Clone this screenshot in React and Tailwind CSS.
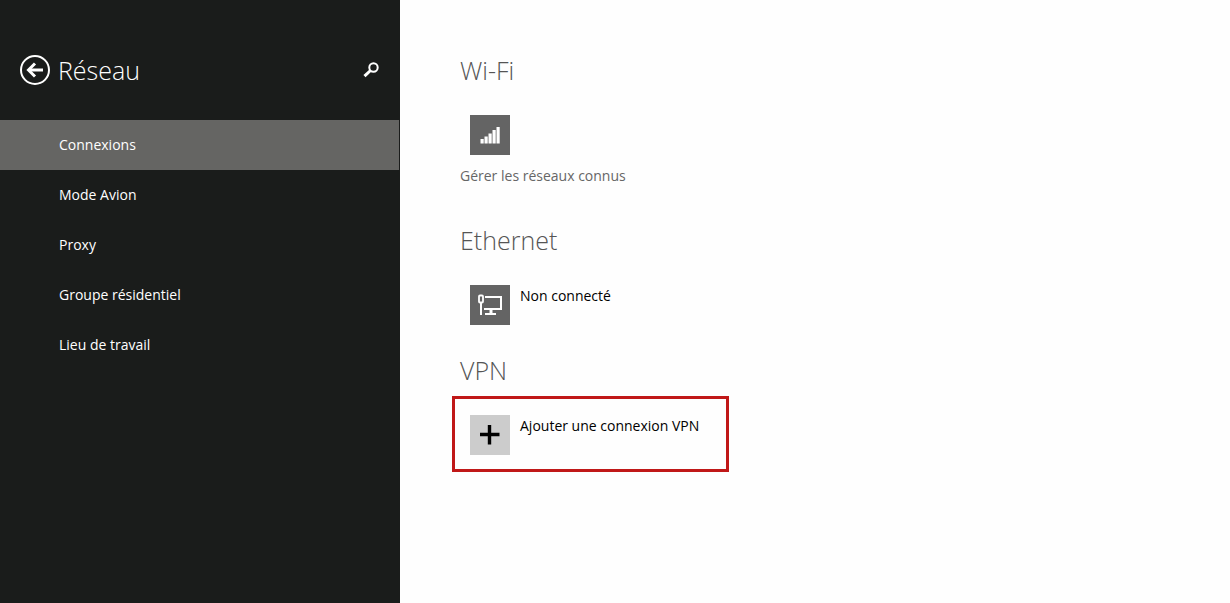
const navItems = [
  "Connexions",
  "Mode Avion",
  "Proxy",
  "Groupe résidentiel",
  "Lieu de travail",
];

function BackIcon() {
  return (
    <svg width="30" height="30" viewBox="0 0 30 30" fill="none" stroke="currentColor">
      <circle cx="15" cy="15" r="14" strokeWidth="2" />
      <path d="M9 15H23" strokeWidth="3" />
      <path d="M15 8.5L8.5 15l6.500 6.500" strokeWidth="3" />
    </svg>
  );
}

function SearchIcon() {
  return (
    <svg width="16" height="16" viewBox="0 0 16 16" fill="none" stroke="currentColor">
      <circle cx="10.500" cy="5.500" r="4.200" strokeWidth="2" />
      <path d="M7.500 8.500L1.500 14.200" strokeWidth="3" />
    </svg>
  );
}

function WifiIcon() {
  return (
    <svg width="40" height="40" viewBox="0 0 40 40" fill="currentColor">
      <rect x="10.500" y="24" width="3.200" height="4.500" />
      <rect x="14.500" y="21.500" width="3.200" height="7" />
      <rect x="18.500" y="18.500" width="3.200" height="10" />
      <rect x="22.500" y="15" width="3.200" height="13.500" />
      <rect x="26.500" y="12" width="3.200" height="16.500" />
    </svg>
  );
}

function EthernetIcon() {
  return (
    <svg width="40" height="40" viewBox="0 0 40 40" fill="none" stroke="currentColor">
      <rect x="9" y="10.500" width="4" height="7" rx="1" strokeWidth="1.800" />
      <path d="M11 18v12" strokeWidth="2" />
      <path d="M15 12H31V24H14" strokeWidth="2" />
      <path d="M21 24v5" strokeWidth="3" />
      <path d="M15 29H26" strokeWidth="2" />
    </svg>
  );
}

function PlusIcon() {
  return (
    <svg width="40" height="40" viewBox="0 0 40 40" fill="none" stroke="currentColor">
      <path d="M10 19.500H29.500M19.500 10V29.500" strokeWidth="3.400" />
    </svg>
  );
}

function SectionTitle({ children }) {
  return (
    <h2 className="text-[25px] leading-10 font-light text-[#555555]">{children}</h2>
  );
}

function Sidebar() {
  return (
    <aside className="w-[400px] shrink-0 bg-[#1a1c1b] text-white">
      <header className="flex h-[120px] items-center gap-2 pb-[10px] pt-[30px] pl-5 pr-[21px]">
        <button type="button" aria-label="Retour">
          <BackIcon />
        </button>
        <h1 className="flex-1 text-[25px] leading-10 font-light">Réseau</h1>
        <button type="button" aria-label="Rechercher">
          <SearchIcon />
        </button>
      </header>
      <nav className="mr-px">
        {navItems.map((item, i) => (
          <a
            key={item}
            href="#"
            aria-current={i === 0 ? "page" : undefined}
            className={`flex h-[50px] items-center pl-[59px] ${i === 0 ? "bg-[#656563]" : ""}`}
          >
            {item}
          </a>
        ))}
      </nav>
    </aside>
  );
}

export default function App() {
  return (
    <div className="flex min-h-screen bg-[#fefefe] font-['Open_Sans','Noto_Sans',sans-serif] text-[14px] leading-[22px]">
      <Sidebar />
      <main className="flex-1 pl-[60px] pt-[50px]">
        {/* Wi-Fi */}
        <section>
          <SectionTitle>Wi-Fi</SectionTitle>
          <button
            type="button"
            aria-label="Wi-Fi"
            className="ml-[10px] mt-[25px] block bg-[#646464] text-white"
          >
            <WifiIcon />
          </button>
          <a href="#" className="mt-[10px] block w-fit text-[#666666]">
            Gérer les réseaux connus
          </a>
        </section>

        {/* Ethernet */}
        <section className="mt-[33px]">
          <SectionTitle>Ethernet</SectionTitle>
          <button type="button" className="ml-[10px] mt-[25px] flex items-start gap-[10px]">
            <span className="bg-[#646464] text-white">
              <EthernetIcon />
            </span>
            Non connecté
          </button>
        </section>

        {/* VPN */}
        <section className="mt-[25px]">
          <SectionTitle>VPN</SectionTitle>
          <div className="-ml-2 mt-[6px] w-fit border-3 border-[#c01818] pt-4 pb-[14px] pl-[15px] pr-[27px]">
            <button type="button" className="flex items-start gap-[10px]">
              <span className="bg-[#cccccc] text-black">
                <PlusIcon />
              </span>
              Ajouter une connexion VPN
            </button>
          </div>
        </section>
      </main>
    </div>
  );
}
